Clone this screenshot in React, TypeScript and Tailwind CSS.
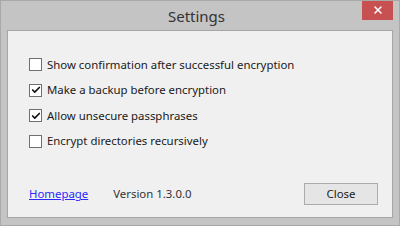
import { Check, X } from "lucide-react";

const options = [
  { label: "Show confirmation after successful encryption", checked: false },
  { label: "Make a backup before encryption", checked: true },
  { label: "Allow unsecure passphrases", checked: true },
  { label: "Encrypt directories recursively", checked: false },
];

function CheckBox({ checked }: { checked: boolean }) {
  return (
    <div className="size-[13px] border border-[#707070] bg-white flex items-center justify-center shrink-0">
      {checked && <Check size={10} strokeWidth={4} className="text-[#111]" />}
    </div>
  );
}

export default function App() {
  return (
    <div
      className="w-[400px] h-[226px] bg-[#c4c4c4] border border-[#a9a9a9] flex flex-col overflow-hidden"
      style={{ fontFamily: '"Noto Sans", "Open Sans", sans-serif' }}
    >
      <div className="h-[29px] flex items-start shrink-0">
        <div className="flex-1 h-full flex items-center justify-center pl-[30px] text-[15px] text-[#333] pt-[1px]">
          Settings
        </div>
        <button className="w-[31px] h-[20px] bg-[#c75050] flex items-center justify-center mr-[6px] -mt-[1px]">
          <X size={12} strokeWidth={3} className="text-white" />
        </button>
      </div>
      <div className="flex-1 mx-[6px] mb-[7px] bg-[#f0f0f0] border border-[#a6a6a6] flex flex-col text-[11.4px] text-[#1a1a1a]">
        <div className="flex flex-col gap-[12.5px] pt-[27px] pl-[21px]">
          {options.map((o) => (
            <div key={o.label} className="flex items-center gap-[5px] h-[13px]">
              <CheckBox checked={o.checked} />
              <span className="leading-none">{o.label}</span>
            </div>
          ))}
        </div>
        <div className="mt-auto mb-[12px] flex items-center pl-[21px] pr-[14px]">
          <a className="text-[#2a2aff] underline">Homepage</a>
          <span className="ml-[25px] text-[#333]">Version 1.3.0.0</span>
          <button className="ml-auto w-[74px] h-[22px] border border-[#acacac] bg-[#e5e5e5] text-[#1a1a1a]">
            Close
          </button>
        </div>
      </div>
    </div>
  );
}
